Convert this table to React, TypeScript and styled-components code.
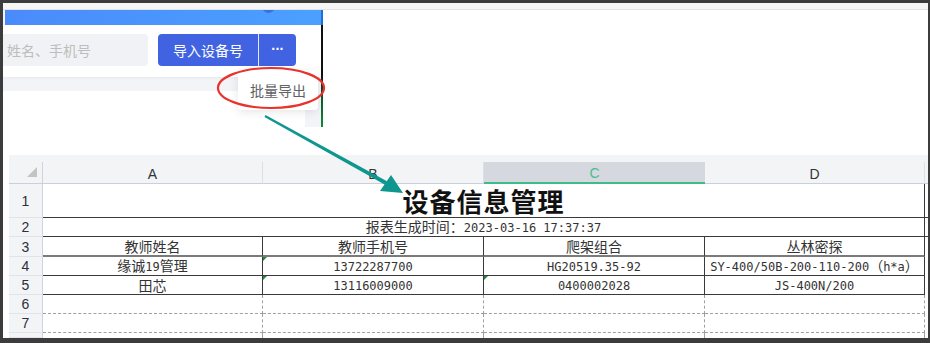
import React from 'react';
import styled, { createGlobalStyle, css } from 'styled-components';

const Global = createGlobalStyle`
  html, body { margin: 0; padding: 0; background: #3c3c3c; }
  body { font-family: "Liberation Sans", "Noto Sans CJK SC", sans-serif; }
  * { box-sizing: border-box; }
`;

const Frame = styled.div`
  position: relative;
  width: 930px;
  height: 343px;
  background: #3c3c3c;
  padding: 3px 2px 5px 3px;
  overflow: hidden;
`;

const Canvas = styled.div`
  width: 100%;
  height: 100%;
  background: #fff;
  display: flex;
  flex-direction: column;
`;

const TopStrip = styled.div`
  flex: none;
  height: 7px;
  background: #f6f6f6;
  border-bottom: 1px solid #e3e3e3;
`;

const Upper = styled.div`
  flex: none;
  display: flex;
  height: 117px;
`;

const Shot = styled.div`
  position: relative;
  width: 318px;
  display: flex;
  flex-direction: column;
  background: #f3f4f7;
`;

const BlueBar = styled.div`
  position: relative;
  height: 15px;
  margin-left: 2px;
  background: linear-gradient(90deg, #4a8bfb, #4aa0ff);
  overflow: hidden;
`;

const Avatar = styled.span`
  position: absolute;
  left: 257px;
  top: -10px;
  width: 13px;
  height: 13px;
  border-radius: 50%;
  background: #3a6fe6;
`;

const Toolbar = styled.div`
  height: 52px;
  background: #fff;
  display: flex;
  align-items: flex-start;
  gap: 10px;
  padding-top: 9px;
  box-shadow: 0 1px 3px rgba(0, 0, 0, 0.05);
`;

const Search = styled.div`
  width: 145px;
  height: 32px;
  background: #f0f2f5;
  border-radius: 0 4px 4px 0;
  display: flex;
  align-items: center;
  padding-left: 4px;
  font-size: 14px;
  color: #bdbdbd;
  font-family: "Noto Sans CJK SC", sans-serif;
`;

const BtnGroup = styled.div`
  display: flex;
  height: 32px;
  border-radius: 4px;
  overflow: hidden;
`;

const Btn = styled.button<{ $w: number; $dots?: boolean }>`
  width: ${p => p.$w}px;
  height: 32px;
  border: none;
  padding: 0;
  margin: 0;
  background: #4163e2;
  color: #fff;
  font-size: 14px;
  font-family: ${p => (p.$dots ? '"Liberation Sans", sans-serif' : '"Noto Sans CJK SC", sans-serif')};
  display: flex;
  align-items: center;
  justify-content: center;
  line-height: 1;
  ${p =>
    p.$dots &&
    css`
      font-weight: 700;
      letter-spacing: -0.5px;
      padding-bottom: 2px;
    `}
`;

const BtnSep = styled.span`
  width: 1px;
  background: #e4eafc;
`;

const GrayGap = styled.div`
  height: 14px;
`;

const LowerRow = styled.div`
  flex: 1;
  display: flex;
`;

const WhitePanel = styled.div`
  width: 302px;
  background: #fff;
`;

const Popup = styled.div`
  position: absolute;
  left: 235px;
  top: 60px;
  width: 80px;
  height: 40px;
  background: #fff;
  border-radius: 4px;
  box-shadow: 0 2px 10px rgba(0, 0, 0, 0.1);
  display: flex;
  align-items: center;
  padding-left: 12px;
  font-size: 14px;
  color: #606266;
  font-family: "Noto Sans CJK SC", sans-serif;
`;

const Mark = styled.svg`
  position: absolute;
  left: 211px;
  top: 56px;
  overflow: visible;
`;

const Divider = styled.div`
  width: 2px;
  background: linear-gradient(
    to bottom,
    #1f6fd6 0,
    #1f6fd6 15px,
    #111 15px,
    #111 55%,
    #0b5a2c 75%,
    #0f8a3a 100%
  );
`;

const Blank = styled.div`
  flex: 1;
  background: #fff;
`;

const Spacer = styled.div`
  flex: none;
  height: 28px;
`;

const Sheet = styled.div`
  flex: 1;
  margin-left: 6px;
  display: flex;
  flex-direction: column;
  overflow: hidden;
`;

const SheetStrip = styled.div`
  flex: none;
  height: 7px;
  background: #f3f4f6;
`;

const Grid = styled.div`
  flex: 1;
  display: grid;
  grid-template-columns: 34px 220px 221px 221px 220px 1fr;
  grid-template-rows: 22px 34px 19px 20px 19px 19px 19px 19px 1fr;
  overflow: hidden;
`;

const Corner = styled.div`
  position: relative;
  background: #f3f4f6;
  border-right: 1px solid #cdd3e4;
  border-bottom: 1px solid #c9cfe2;
  &::after {
    content: '';
    position: absolute;
    right: 5px;
    bottom: 6px;
    border-left: 10px solid transparent;
    border-bottom: 10px solid #c4c4c4;
  }
`;

const ColHead = styled.div<{ $active?: boolean }>`
  display: flex;
  align-items: center;
  justify-content: center;
  padding-top: 2px;
  font-size: 14px;
  color: #333;
  background: #f3f4f6;
  border-right: 1px solid #dadfe9;
  border-bottom: 1px solid #c9cfe2;
  ${p =>
    p.$active &&
    css`
      background: #d5d8de;
      color: #45bf8a;
      border-right: none;
      border-bottom: 2px solid #3dbd86;
    `}
`;

const HeadFill = styled.div`
  background: #f3f4f6;
  border-bottom: 1px solid #c9cfe2;
`;

const RowNum = styled.div`
  display: flex;
  align-items: center;
  justify-content: center;
  font-size: 14px;
  color: #2c2f3d;
  background: #f3f4f6;
  border-right: 1px solid #cdd3e4;
  border-bottom: 1px solid #dfe3ec;
`;

type Line = 'solid' | 'thick' | 'dash' | 'none';
const lineCss = (l: Line) =>
  l === 'solid'
    ? '1px solid #3a3a3a'
    : l === 'thick'
    ? '2px solid #7a7a7a'
    : l === 'dash'
    ? '1px dashed #a0a0a0'
    : 'none';

const Cell = styled.div<{ $bottom: Line; $right: Line; $span?: number; $flag?: boolean }>`
  position: relative;
  grid-column: span ${p => p.$span ?? 1};
  display: flex;
  align-items: center;
  justify-content: center;
  white-space: nowrap;
  line-height: 1;
  font-size: 14px;
  color: #333;
  font-family: "Noto Sans CJK SC", sans-serif;
  border-bottom: ${p => lineCss(p.$bottom)};
  border-right: ${p => lineCss(p.$right)};
  ${p =>
    p.$flag &&
    css`
      &::before {
        content: '';
        position: absolute;
        left: 0;
        top: 0;
        border-top: 4px solid #1d8a3b;
        border-right: 4px solid transparent;
      }
    `}
`;

const CellText = styled.span`
  display: inline-block;
  line-height: 16px;
`;

const Title = styled.span`
  display: inline-block;
  font-size: 26px;
  line-height: 30px;
  font-weight: 700;
  color: #111;
  letter-spacing: 1px;
`;

const Latin = styled.span`
  font-family: "DejaVu Sans Mono", monospace;
  font-size: 12px;
`;

const Arrow = styled.svg`
  position: absolute;
  left: 0;
  top: 0;
  pointer-events: none;
`;

function Mixed({ text }: { text: string }) {
  const parts = text.split(/([\x20-\x7e]+)/).filter(Boolean);
  return (
    <CellText>
      {parts.map((p, i) =>
        /^[\x20-\x7e]+$/.test(p) ? <Latin key={i}>{p}</Latin> : <span key={i}>{p}</span>
      )}
    </CellText>
  );
}

const headers = ['A', 'B', 'C', 'D'];

const dataRows: { label: string; cells: string[]; bottom: Line; right: Line; flags?: boolean[] }[] = [
  { label: '3', cells: ['教师姓名', '教师手机号', '爬架组合', '丛林密探'], bottom: 'thick', right: 'solid' },
  {
    label: '4',
    cells: ['缘诚19管理', '13722287700', 'HG20519.35-92', 'SY-400/50B-200-110-200（h*a）'],
    bottom: 'solid',
    right: 'solid',
    flags: [false, true, false, false],
  },
  {
    label: '5',
    cells: ['田芯', '13116009000', '0400002028', 'JS-400N/200'],
    bottom: 'solid',
    right: 'solid',
    flags: [false, true, true, false],
  },
  { label: '6', cells: ['', '', '', ''], bottom: 'dash', right: 'dash' },
  { label: '7', cells: ['', '', '', ''], bottom: 'dash', right: 'dash' },
  { label: '', cells: ['', '', '', ''], bottom: 'none', right: 'dash' },
];

export default function App() {
  return (
    <>
      <Global />
      <Frame>
        <Canvas>
          <TopStrip />
          <Upper>
            <Shot>
              <BlueBar>
                <Avatar />
              </BlueBar>
              <Toolbar>
                <Search>姓名、手机号</Search>
                <BtnGroup>
                  <Btn $w={100}>导入设备号</Btn>
                  <BtnSep />
                  <Btn $w={37} $dots>
                    ···
                  </Btn>
                </BtnGroup>
              </Toolbar>
              <GrayGap />
              <LowerRow>
                <WhitePanel />
              </LowerRow>
              <Popup>批量导出</Popup>
              <Mark width="110" height="44" viewBox="0 0 110 44">
                <ellipse cx="57" cy="22" rx="53" ry="20" fill="none" stroke="#e8322b" strokeWidth="2.2" />
              </Mark>
            </Shot>
            <Divider />
            <Blank />
          </Upper>
          <Spacer />
          <Sheet>
            <SheetStrip />
            <Grid>
              <Corner />
              {headers.map(h => (
                <ColHead key={h} $active={h === 'C'}>
                  {h}
                </ColHead>
              ))}
              <HeadFill />

              <RowNum>1</RowNum>
              <Cell $span={4} $bottom="solid" $right="solid">
                <Title>设备信息管理</Title>
              </Cell>
              <Cell $bottom="solid" $right="none" />

              <RowNum>2</RowNum>
              <Cell $span={4} $bottom="solid" $right="solid">
                <Mixed text="报表生成时间：2023-03-16 17:37:37" />
              </Cell>
              <Cell $bottom="solid" $right="none" />

              {dataRows.map((r, ri) => (
                <React.Fragment key={ri}>
                  <RowNum>{r.label}</RowNum>
                  {r.cells.map((c, ci) => (
                    <Cell key={ci} $bottom={r.bottom} $right={r.right} $flag={r.flags?.[ci]}>
                      {c && <Mixed text={c} />}
                    </Cell>
                  ))}
                  <Cell $bottom="none" $right="none" />
                </React.Fragment>
              ))}
            </Grid>
          </Sheet>
        </Canvas>
        <Arrow width="930" height="343" viewBox="0 0 930 343">
          <polygon points="264.5,116.9 265.5,115.1 387,181.3 385,184.8" fill="#0f968f" />
          <polygon points="380,191 391,175 403,193" fill="#0f968f" />
        </Arrow>
      </Frame>
    </>
  );
}
